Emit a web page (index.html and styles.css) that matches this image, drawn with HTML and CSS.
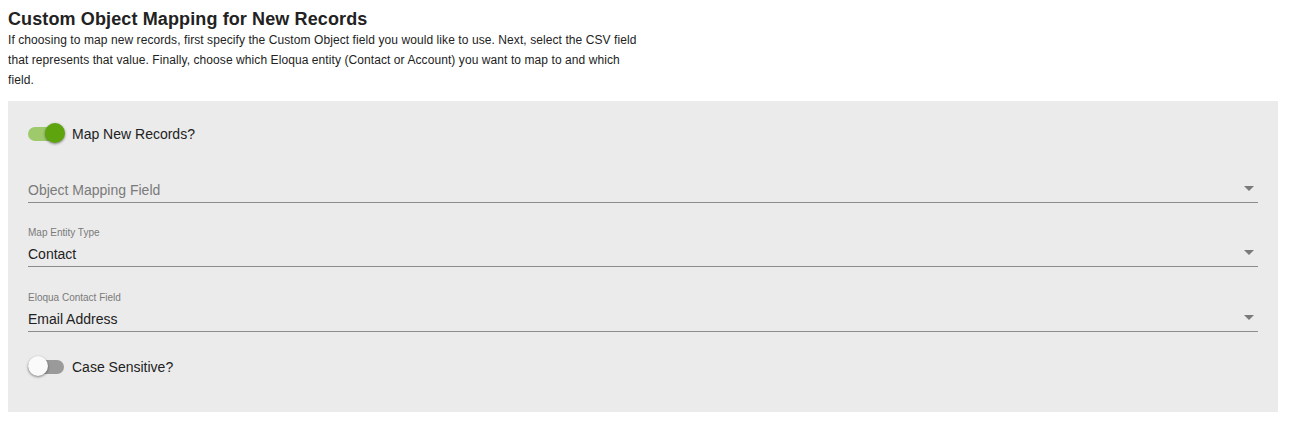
FILE: index.html
```html
<!DOCTYPE html>
<html>
<head>
<meta charset="utf-8">
<link rel="stylesheet" href="styles.css">
</head>
<body>
<div class="intro">
  <h2 class="title">Custom Object Mapping for New Records</h2>
  <p class="desc">If choosing to map new records, first specify the Custom Object field you would like to use. Next, select the CSV field that represents that value. Finally, choose which Eloqua entity (Contact or Account) you want to map to and which field.</p>
</div>
<div class="panel">
  <div class="toggle-row">
    <span class="toggle on"><span class="track"></span><span class="thumb"></span></span>
    <span class="toggle-label">Map New Records?</span>
  </div>
  <div class="field">
    <div class="field-label"></div>
    <div class="field-value placeholder">Object Mapping Field<span class="arrow"></span></div>
  </div>
  <div class="field">
    <div class="field-label">Map Entity Type</div>
    <div class="field-value">Contact<span class="arrow"></span></div>
  </div>
  <div class="field">
    <div class="field-label">Eloqua Contact Field</div>
    <div class="field-value">Email Address<span class="arrow"></span></div>
  </div>
  <div class="toggle-row last">
    <span class="toggle off"><span class="track"></span><span class="thumb"></span></span>
    <span class="toggle-label">Case Sensitive?</span>
  </div>
</div>
</body>
</html>
```
FILE: styles.css
```css
html, body {
  margin: 0;
  padding: 0;
  background: #ffffff;
}
body {
  margin: 8px;
  font-family: "Liberation Sans", Arial, sans-serif;
  color: #222222;
}
.intro {
  width: 635px;
}
.title {
  margin: 0;
  font-size: 18px;
  line-height: 22px;
  font-weight: bold;
  letter-spacing: 0.12px;
  color: #222222;
}
.desc {
  margin: 0 0 11px 0;
  font-size: 12px;
  line-height: 20px;
  letter-spacing: 0.08px;
  color: #222222;
}
.panel {
  width: 1270px;
  box-sizing: border-box;
  background: #ebebeb;
  padding: 21px 20px 33px 20px;
}
.toggle-row {
  display: flex;
  align-items: center;
  height: 24px;
  gap: 8px;
}
.toggle-row.last {
  margin-top: 23px;
}
.toggle {
  position: relative;
  width: 36px;
  height: 24px;
  flex: none;
}
.toggle .track {
  position: absolute;
  left: 0;
  top: 5px;
  width: 36px;
  height: 14px;
  border-radius: 7px;
}
.toggle .thumb {
  position: absolute;
  top: 1px;
  width: 20px;
  height: 20px;
  border-radius: 50%;
  box-shadow: 0 1px 3px rgba(0,0,0,0.3), 0 1px 2px rgba(0,0,0,0.2);
}
.toggle.on .track {
  background: #9fca6b;
}
.toggle.on .thumb {
  left: 17px;
  background: #5ea40f;
}
.toggle.off .track {
  background: #9a9a9a;
}
.toggle.off .thumb {
  left: 0;
  background: #fafafa;
}
.toggle-label {
  font-size: 14px;
  color: #222222;
}
.field {
  margin-top: 17px;
}
.field + .field {
  margin-top: 24px;
}
.field + .field + .field {
  margin-top: 25px;
}
.field-label {
  height: 12px;
  font-size: 10px;
  line-height: 12px;
  color: #7a7a7a;
}
.field-value {
  position: relative;
  margin-top: 4px;
  font-size: 14px;
  line-height: 23px;
  color: #222222;
  border-bottom: 1px solid #8c8c8c;
}
.field-value.placeholder {
  color: #7a7a7a;
}
.arrow {
  position: absolute;
  right: 4px;
  top: 7px;
  width: 0;
  height: 0;
  border-left: 5px solid transparent;
  border-right: 5px solid transparent;
  border-top: 5px solid #7a7a7a;
}
```
